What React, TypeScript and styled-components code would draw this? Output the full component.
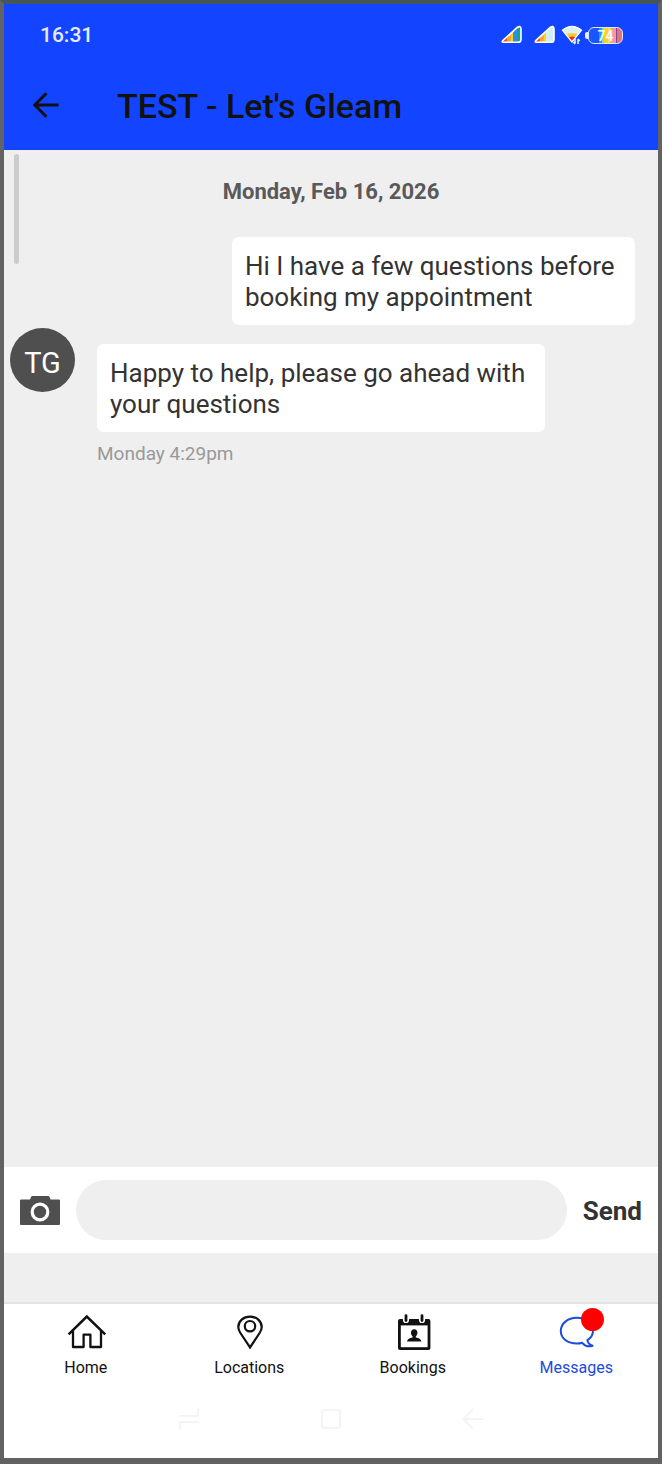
import React from "react";
import styled, { createGlobalStyle } from "styled-components";

const GlobalStyle = createGlobalStyle`
  *, *::before, *::after { box-sizing: border-box; }
  body { margin: 0; background: #626262; }
  button, input { font-family: inherit; margin: 0; }
`;

const Screen = styled.div`
  display: flex;
  flex-direction: column;
  min-height: 100vh;
  border: 4px solid #626262;
  border-top-color: #44565a;
  border-bottom-width: 6px;
  background: #efefef;
  font-family: Roboto, "Liberation Sans", sans-serif;
  color: #333333;
`;

const Header = styled.header`
  background: #1344ff;
`;

const StatusBar = styled.div`
  display: flex;
  align-items: center;
  justify-content: space-between;
  height: 62px;
  padding: 0 35px 0 36px;
`;

const Clock = styled.time`
  font-size: 21px;
  font-weight: 500;
  line-height: 24px;
  color: #e6ebff;
`;

const StatusIcons = styled.div`
  display: flex;
  align-items: center;
  svg { display: block; }
`;

const Signals = styled.div`
  display: flex;
  gap: 10px;
  margin-right: 5px;
`;

const WifiIcon = styled.svg`
  margin-right: 2px;
`;

const Battery = styled.div`
  display: flex;
  align-items: center;
  &::before {
    content: "";
    width: 3px;
    height: 7px;
    border-radius: 2px 0 0 2px;
    background: #e8f0ff;
  }
`;

const BatteryBody = styled.span`
  width: 35px;
  height: 17px;
  border: 1px solid #dbe6ff;
  border-radius: 6px;
  background: linear-gradient(
    90deg,
    #1a55ff 0 30%,
    #16a6f5 30% 38%,
    #7fd4d8 38% 46%,
    #ffd21c 46% 58%,
    #f7e27c 58% 64%,
    #ffc400 64% 70%,
    #f59a9f 70% 82%,
    #7c4a9c 82% 86%,
    #e8707c 86%
  );
  color: #ffffff;
  font-size: 14px;
  font-weight: 500;
  line-height: 16px;
  text-align: center;
`;

const AppBar = styled.div`
  display: flex;
  align-items: center;
  height: 84px;
  padding: 0 24px 6px;
`;

const BackButton = styled.button`
  display: flex;
  padding: 0;
  border: 0;
  background: none;
  color: #111111;
`;

const Title = styled.h1`
  margin: 0 0 0 53px;
  padding-top: 1px;
  font-size: 34px;
  font-weight: 500;
  line-height: 40px;
  color: #111111;
`;

const Chat = styled.main`
  position: relative;
  display: flex;
  flex-direction: column;
  flex: 1;
  padding: 28px 23px 0 6px;
`;

const ScrollThumb = styled.div`
  position: absolute;
  top: 4px;
  left: 10px;
  width: 5px;
  height: 110px;
  border-radius: 3px;
  background: #cccccc;
`;

const DateHeading = styled.h2`
  margin: 0 0 31px 17px;
  font-size: 22px;
  font-weight: 700;
  line-height: 28px;
  text-align: center;
  color: #595959;
`;

const MessageRow = styled.div<{ $own?: boolean }>`
  display: flex;
  justify-content: ${(p) => (p.$own ? "flex-end" : "flex-start")};
  gap: 22px;
  margin-bottom: 3px;
`;

const Avatar = styled.div`
  flex: none;
  width: 65px;
  height: 64px;
  border-radius: 50%;
  background: #4f4f4f;
  color: #ffffff;
  font-size: 29px;
  line-height: 70px;
  text-align: center;
`;

const MessageBody = styled.div`
  flex: 1;
  padding-top: 16px;
`;

const Bubble = styled.p<{ $width: string }>`
  width: ${(p) => p.$width};
  margin: 0;
  padding: 14px 12px 12px 13px;
  border-radius: 7px;
  background: #ffffff;
  font-size: 26px;
  line-height: 31px;
  color: #333333;
`;

const Timestamp = styled.time`
  display: block;
  margin-top: 10px;
  font-size: 19px;
  line-height: 24px;
  color: #999999;
`;

const Composer = styled.form`
  display: flex;
  align-items: center;
  gap: 16px;
  padding: 13px 16px;
  margin-bottom: 49px;
  background: #ffffff;
`;

const CameraButton = styled.button`
  display: flex;
  padding: 0;
  border: 0;
  background: none;
`;

const MessageInput = styled.input`
  flex: 1;
  min-width: 0;
  height: 60px;
  padding: 0 24px;
  border: 0;
  border-radius: 30px;
  background: #efefef;
  font-size: 26px;
  color: #333333;
`;

const SendButton = styled.button`
  padding: 2px 0 0;
  border: 0;
  background: none;
  font-size: 26px;
  font-weight: 700;
  line-height: 31px;
  color: #333333;
`;

const TabBar = styled.nav`
  display: grid;
  grid-template-columns: repeat(4, 1fr);
  border-top: 2px solid #e4e4e4;
  padding-top: 8px;
  background: #ffffff;
`;

const Tab = styled.a<{ $active?: boolean }>`
  display: flex;
  flex-direction: column;
  align-items: center;
  gap: 5px;
  color: ${(p) => (p.$active ? "#1c4be0" : "#111111")};
  font-size: 16px;
  line-height: 22px;
  text-decoration: none;
`;

const TabIcon = styled.span`
  position: relative;
  display: flex;
`;

const Badge = styled.span`
  position: absolute;
  top: -4px;
  right: -6px;
  width: 23px;
  height: 23px;
  border-radius: 50%;
  background: #ff0000;
`;

const SystemNav = styled.div`
  display: flex;
  align-items: center;
  justify-content: center;
  gap: 120px;
  height: 79px;
  background: #ffffff;
  color: #f4f4f4;
`;

const SystemButton = styled.button`
  display: flex;
  padding: 0;
  border: 0;
  background: none;
  color: inherit;
`;

function Signal({ id, full }: { id: string; full?: boolean }) {
  return (
    <svg width="23" height="20" viewBox="0 0 23 20" aria-hidden="true">
      <defs>
        <linearGradient id={id}>
          <stop offset="0" stopColor="#d8401c" />
          <stop offset=".28" stopColor="#e8621c" />
          <stop offset=".28" stopColor="#f2a03a" />
          <stop offset=".45" stopColor="#f6b030" />
          <stop offset=".45" stopColor="#ffd21a" />
          <stop offset=".6" stopColor="#ffd21a" />
          <stop offset=".6" stopColor={full ? "#2f8df0" : "#d3eef0"} />
          <stop offset=".78" stopColor={full ? "#2f8df0" : "#d3eef0"} />
          <stop offset=".78" stopColor={full ? "#12a77c" : "#d3eef0"} />
          <stop offset="1" stopColor={full ? "#12a77c" : "#d3eef0"} />
        </linearGradient>
      </defs>
      <path
        d="M3 15.4 L17.5 2.2 Q21 .4 21 4.2 V14.4 Q21 17.2 18 17.2 H4 Q1 17.2 3 15.4Z"
        fill={`url(#${id})`}
        stroke="#ffffff"
        strokeWidth="1.6"
        strokeLinejoin="round"
      />
    </svg>
  );
}

function Wifi() {
  return (
    <WifiIcon width="22" height="20" viewBox="0 0 22 20" aria-hidden="true">
      <path d="M1.4 5.2 Q11 -2.6 20.6 5.2 L11 17Z" fill="#d9f1ef" />
      <path d="M4.6 9 Q11 7.4 17.4 9 L11 17Z" fill="#ffc928" />
      <path d="M7.2 12.2 Q11 11 14.8 12.2 L11 17Z" fill="#dd3b1c" />
      <path
        d="M1.4 5.2 Q11 -2.6 20.6 5.2 L11 17Z"
        fill="none"
        stroke="#ffffff"
        strokeWidth="1.3"
        strokeLinejoin="round"
      />
      <path d="M14 18.6 V14 M12.4 17 L14 19 M17 14 V19 M17 14 L18.6 16" fill="none" stroke="#d9f5f5" strokeWidth="1.6" />
    </WifiIcon>
  );
}

function HomeIcon() {
  return (
    <svg width="44" height="40" viewBox="0 0 44 40" fill="none" stroke="currentColor" strokeWidth="2.3" aria-hidden="true">
      <path d="M4.6 22.4 L22.8 4.6 L41.2 22.4" strokeWidth="2.5" />
      <path d="M9 19 V35 H19.6 V22.6 H26.4 V35 H37 V19" strokeLinejoin="round" />
    </svg>
  );
}

function PinIcon() {
  return (
    <svg width="44" height="40" viewBox="0 0 44 40" fill="none" stroke="currentColor" strokeWidth="2.2" aria-hidden="true">
      <path d="M23 35.4 L13.4 21 C11.7 18.4 11.3 16.6 11.3 15 C11.3 9 16.4 4.6 23 4.6 S34.7 9 34.7 15 C34.7 16.6 34.3 18.4 32.6 21Z" />
      <circle cx="23" cy="14.2" r="5.2" />
    </svg>
  );
}

function CalendarIcon() {
  return (
    <svg width="44" height="40" viewBox="0 0 44 40" aria-hidden="true">
      <rect x="7" y="7" width="32.4" height="31" rx="2" fill="currentColor" />
      <rect x="9.8" y="13.4" width="26.8" height="21.8" fill="#ffffff" />
      <path d="M15 3.6 V8 M31 3.6 V8" stroke="#ffffff" strokeWidth="6.2" strokeLinecap="round" />
      <path d="M15 3.6 V8.6 M31 3.6 V8.6" stroke="currentColor" strokeWidth="2.8" strokeLinecap="round" />
      <ellipse cx="23.2" cy="20.8" rx="3.2" ry="3.6" fill="currentColor" />
      <path d="M21.6 22 H24.8 V25.4 Q30.2 26.2 30.4 29.6 H16 Q16.2 26.2 21.6 25.4Z" fill="currentColor" />
    </svg>
  );
}

function ChatIcon() {
  return (
    <svg width="44" height="40" viewBox="0 0 44 40" fill="none" stroke="currentColor" strokeWidth="2" strokeLinejoin="round" aria-hidden="true">
      <path d="M33.4 28.2 C37 25.8 39 22.6 39 19 C39 11.6 32 5.8 22.8 5.8 S6.8 11.6 6.8 19 S13.6 31.6 22.8 31.6 C24.8 31.6 26.4 31.4 28.2 30.8 C30.6 33.6 34.6 35 38.6 33.8 C35.6 32.8 33.8 31.2 33.4 28.2Z" />
    </svg>
  );
}

export default function App() {
  return (
    <>
      <GlobalStyle />
      <Screen>
        <Header>
          <StatusBar>
            <Clock>16:31</Clock>
            <StatusIcons>
              <Signals>
                <Signal id="signal-one" full />
                <Signal id="signal-two" />
              </Signals>
              <Wifi />
              <Battery>
                <BatteryBody>74</BatteryBody>
              </Battery>
            </StatusIcons>
          </StatusBar>
          <AppBar>
            <BackButton type="button" aria-label="Back">
              <svg width="36" height="36" viewBox="0 0 36 36" fill="none" stroke="currentColor" strokeWidth="3" aria-hidden="true">
                <path d="M30.6 18 H7 M18.4 6.2 L6.8 18 L18.4 29.8" />
              </svg>
            </BackButton>
            <Title>TEST - Let's Gleam</Title>
          </AppBar>
        </Header>

        <Chat>
          <ScrollThumb />
          <DateHeading>Monday, Feb 16, 2026</DateHeading>
          <MessageRow $own>
            <Bubble $width="64.5%">Hi I have a few questions before booking my appointment</Bubble>
          </MessageRow>
          <MessageRow>
            <Avatar>TG</Avatar>
            <MessageBody>
              <Bubble $width="83.3%">Happy to help, please go ahead with your questions</Bubble>
              <Timestamp>Monday 4:29pm</Timestamp>
            </MessageBody>
          </MessageRow>
        </Chat>

        <Composer onSubmit={(e) => e.preventDefault()}>
          <CameraButton type="button" aria-label="Add photo">
            <svg width="40" height="30" viewBox="0 0 40 30" aria-hidden="true">
              <path d="M1 4.6 H10 L11 2 Q11.4 1 12.6 1 H28 Q29.2 1 29.6 2 L30.6 4.6 H39 Q40 4.6 40 5.6 V29 Q40 30 39 30 H1 Q0 30 0 29 V5.6 Q0 4.6 1 4.6Z" fill="#4f4f4f" />
              <circle cx="20" cy="17" r="7.8" fill="none" stroke="#ffffff" strokeWidth="3.2" />
            </svg>
          </CameraButton>
          <MessageInput type="text" aria-label="Message" />
          <SendButton type="submit">Send</SendButton>
        </Composer>

        <TabBar>
          <Tab href="#home">
            <TabIcon><HomeIcon /></TabIcon>
            Home
          </Tab>
          <Tab href="#locations">
            <TabIcon><PinIcon /></TabIcon>
            Locations
          </Tab>
          <Tab href="#bookings">
            <TabIcon><CalendarIcon /></TabIcon>
            Bookings
          </Tab>
          <Tab href="#messages" $active>
            <TabIcon>
              <ChatIcon />
              <Badge />
            </TabIcon>
            Messages
          </Tab>
        </TabBar>

        <SystemNav>
          <SystemButton type="button" aria-label="Recent apps">
            <svg width="22" height="22" viewBox="0 0 22 22" fill="none" stroke="currentColor" strokeWidth="2" aria-hidden="true">
              <path d="M1 8 H20 V1 M21 14 H2 V21" />
            </svg>
          </SystemButton>
          <SystemButton type="button" aria-label="Home screen">
            <svg width="22" height="22" viewBox="0 0 22 22" fill="none" stroke="currentColor" strokeWidth="2" aria-hidden="true">
              <rect x="2" y="2" width="18" height="18" rx="2" />
            </svg>
          </SystemButton>
          <SystemButton type="button" aria-label="System back">
            <svg width="22" height="22" viewBox="0 0 22 22" fill="none" stroke="currentColor" strokeWidth="2" aria-hidden="true">
              <path d="M21 11 H2 M11 1 L1.6 11 L11 21" />
            </svg>
          </SystemButton>
        </SystemNav>
      </Screen>
    </>
  );
}
